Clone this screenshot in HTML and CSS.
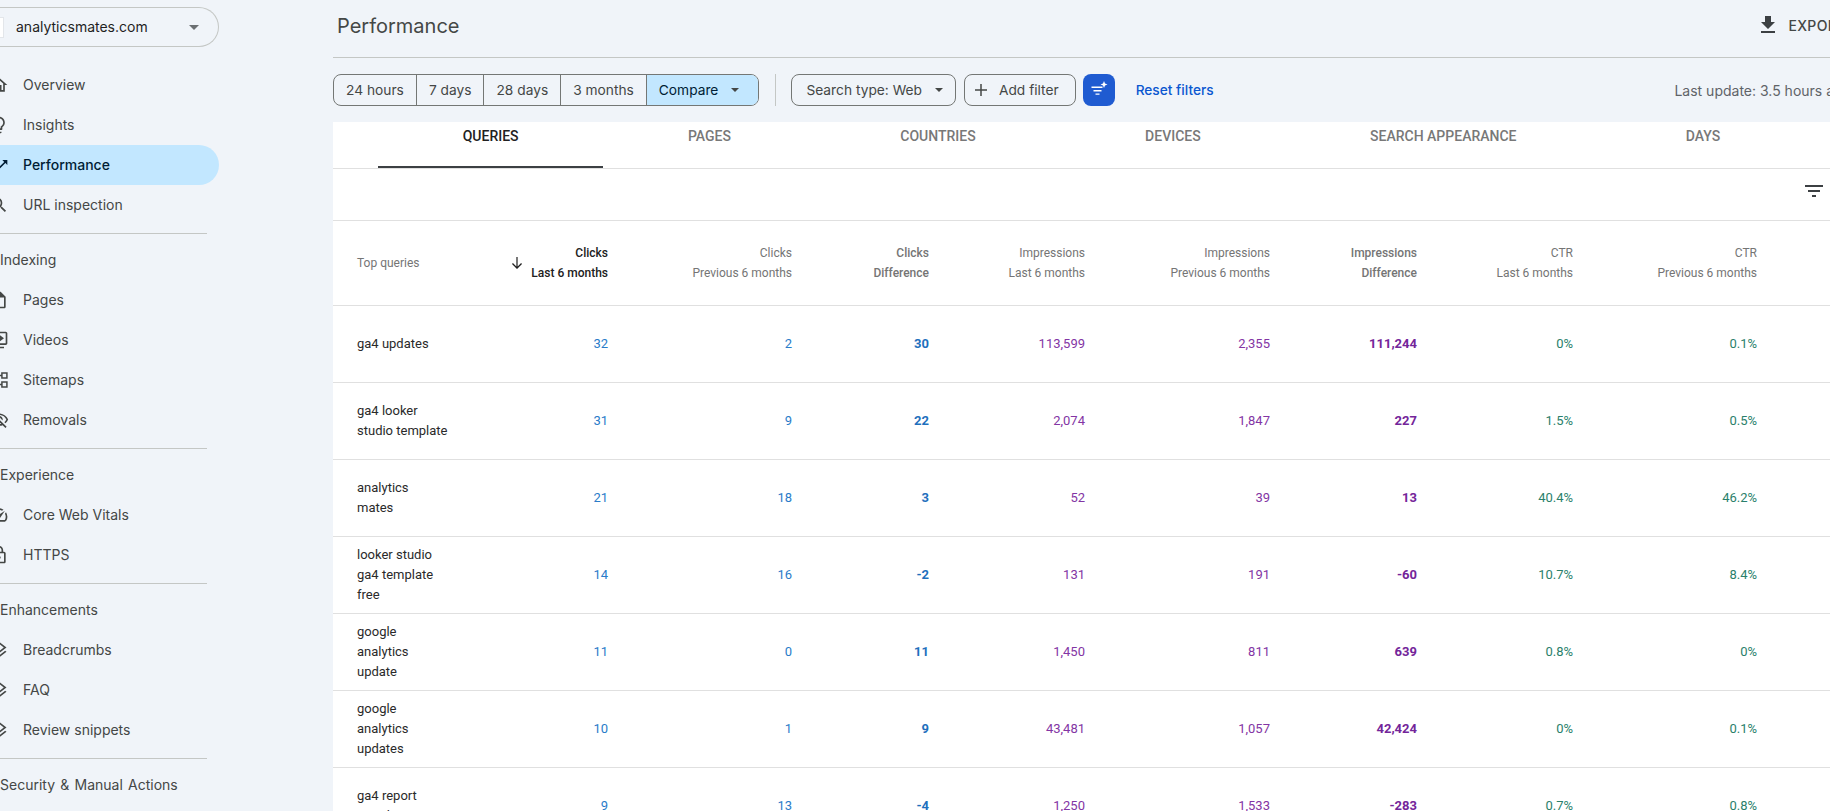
FILE: index.html
```html
<!DOCTYPE html>
<html lang="en">
<head>
<meta charset="utf-8">
<title>Performance</title>
<link rel="stylesheet" href="styles.css">
</head>
<body>
<svg class="defs" aria-hidden="true">
  <symbol id="i-home" viewBox="0 0 24 24"><path d="M12 5.69l5 4.5V18h-2v-6H9v6H7v-7.81l5-4.5M12 3L2 12h3v8h6v-6h2v6h6v-8h3L12 3z"/></symbol>
  <symbol id="i-bulb" viewBox="0 0 24 24"><path d="M9 21c0 .55.45 1 1 1h4c.55 0 1-.45 1-1v-1H9v1zm3-19C8.14 2 5 5.14 5 9c0 2.38 1.19 4.47 3 5.74V17c0 .55.45 1 1 1h6c.55 0 1-.45 1-1v-2.26c1.81-1.27 3-3.36 3-5.74 0-3.86-3.14-7-7-7zm2.85 11.1l-.85.6V16h-4v-2.3l-.85-.6A4.997 4.997 0 0 1 7 9c0-2.76 2.24-5 5-5s5 2.24 5 5c0 1.63-.8 3.16-2.15 4.1z"/></symbol>
  <symbol id="i-trend" viewBox="0 0 24 24"><path d="M16 6l2.29 2.29-4.88 4.88-4-4L2 16.59 3.41 18l6-6 4 4 6.3-6.29L22 12V6z"/></symbol>
  <symbol id="i-search" viewBox="0 0 24 24"><path d="M15.5 14h-.79l-.28-.27A6.471 6.471 0 0 0 16 9.5 6.5 6.5 0 1 0 9.5 16c1.61 0 3.09-.59 4.23-1.57l.27.28v.79l5 4.99L20.49 19l-4.99-5zm-6 0C7.01 14 5 11.99 5 9.5S7.01 5 9.5 5 14 7.01 14 9.5 11.99 14 9.5 14z"/></symbol>
  <symbol id="i-page" viewBox="0 0 24 24"><path d="M14 2H6c-1.1 0-2 .9-2 2v16c0 1.1.9 2 2 2h12c1.1 0 2-.9 2-2V8l-6-6zm4 18H6V4h7v5h5v11z"/></symbol>
  <symbol id="i-video" viewBox="0 0 24 24"><path d="M4 6H2v14c0 1.1.9 2 2 2h14v-2H4V6zm16-4H8c-1.1 0-2 .9-2 2v12c0 1.1.9 2 2 2h12c1.1 0 2-.9 2-2V4c0-1.1-.9-2-2-2zm0 14H8V4h12v12zM12 5.5v9l6-4.5z"/></symbol>
  <symbol id="i-map" viewBox="0 0 24 24"><path fill="none" stroke="#444746" stroke-width="1.8" d="M15.5 3.600h6v6h-6zM15.500 14.400h6v6h-6zM15.500 6.600H9M15.500 17.400H9M9 6.600v10.800"/></symbol>
  <symbol id="i-off" viewBox="0 0 24 24"><path d="M12 6a9.77 9.77 0 0 1 8.82 5.5 9.647 9.647 0 0 1-2.41 3.12l1.41 1.41c1.39-1.23 2.49-2.77 3.18-4.53C21.27 7.11 17 4 12 4c-1.27 0-2.49.2-3.64.57l1.65 1.65C10.66 6.09 11.32 6 12 6zm-1.07 1.14L13 9.21c.57.25 1.03.71 1.28 1.28l2.07 2.07c.08-.34.14-.7.14-1.07C16.5 9.01 14.48 7 12 7c-.37 0-.72.05-1.07.14zM2.01 3.87l2.68 2.68A11.738 11.738 0 0 0 1 11.5C2.73 15.89 7 19 12 19c1.52 0 2.98-.29 4.32-.82l3.42 3.42 1.41-1.41L3.42 2.45 2.01 3.87zm7.5 7.5l2.61 2.61c-.04.01-.08.02-.12.02-1.38 0-2.5-1.12-2.5-2.5 0-.05.01-.08.01-.13zm-3.4-3.4l1.75 1.75a4.6 4.6 0 0 0-.36 1.78 4.507 4.507 0 0 0 6.27 4.14l.98.98c-.88.24-1.8.38-2.75.38a9.77 9.77 0 0 1-8.82-5.5c.7-1.43 1.72-2.61 2.93-3.53z"/></symbol>
  <symbol id="i-speed" viewBox="0 0 24 24"><path d="M20.38 8.57l-1.23 1.85a8 8 0 0 1-.22 7.58H5.07A8 8 0 0 1 15.58 6.85l1.85-1.23A10 10 0 0 0 3.35 19a2 2 0 0 0 1.72 1h13.85a2 2 0 0 0 1.74-1 10 10 0 0 0-.27-10.44zm-9.79 6.84a2 2 0 0 0 2.83 0l5.66-8.49-8.49 5.66a2 2 0 0 0 0 2.83z"/></symbol>
  <symbol id="i-lock" viewBox="0 0 24 24"><path d="M18 8h-1V6c0-2.76-2.24-5-5-5S7 3.24 7 6v2H6c-1.1 0-2 .9-2 2v10c0 1.1.9 2 2 2h12c1.1 0 2-.9 2-2V10c0-1.1-.9-2-2-2zM9 6c0-1.66 1.34-3 3-3s3 1.34 3 3v2H9V6zm9 14H6V10h12v10zm-6-3c1.1 0 2-.9 2-2s-.9-2-2-2-2 .9-2 2 .9 2 2 2z"/></symbol>
  <symbol id="i-layers" viewBox="0 0 24 24"><path d="M11.99 18.54l-7.37-5.73L3 14.07l9 7 9-7-1.63-1.27-7.38 5.74zM12 16l7.36-5.73L21 9l-9-7-9 7 1.63 1.27L12 16zm0-11.47L17.74 9 12 13.47 6.26 9 12 4.53z"/></symbol>
</svg>

<div class="app">
  <aside class="sidebar">
    <div class="side-inner">
      <div class="property">
        <span class="favicon"></span>
        <span class="property-name">analyticsmates.com</span>
        <span class="caret caret-lg"></span>
      </div>
      <nav class="nav">
        <a class="nav-item"><svg class="nav-icon"><use href="#i-home"/></svg>Overview</a>
        <a class="nav-item"><svg class="nav-icon"><use href="#i-bulb"/></svg>Insights</a>
        <a class="nav-item active"><svg class="nav-icon"><use href="#i-trend"/></svg>Performance</a>
        <a class="nav-item"><svg class="nav-icon"><use href="#i-search"/></svg>URL inspection</a>
        <hr class="nav-div">
        <div class="nav-head">Indexing</div>
        <a class="nav-item"><svg class="nav-icon"><use href="#i-page"/></svg>Pages</a>
        <a class="nav-item"><svg class="nav-icon"><use href="#i-video"/></svg>Videos</a>
        <a class="nav-item"><svg class="nav-icon"><use href="#i-map"/></svg>Sitemaps</a>
        <a class="nav-item"><svg class="nav-icon"><use href="#i-off"/></svg>Removals</a>
        <hr class="nav-div">
        <div class="nav-head">Experience</div>
        <a class="nav-item"><svg class="nav-icon"><use href="#i-speed"/></svg>Core Web Vitals</a>
        <a class="nav-item"><svg class="nav-icon"><use href="#i-lock"/></svg>HTTPS</a>
        <hr class="nav-div">
        <div class="nav-head">Enhancements</div>
        <a class="nav-item"><svg class="nav-icon"><use href="#i-layers"/></svg>Breadcrumbs</a>
        <a class="nav-item"><svg class="nav-icon"><use href="#i-layers"/></svg>FAQ</a>
        <a class="nav-item"><svg class="nav-icon"><use href="#i-layers"/></svg>Review snippets</a>
        <hr class="nav-div">
        <div class="nav-head nav-head-wide">Security &amp; Manual Actions</div>
      </nav>
    </div>
  </aside>

  <main class="main">
    <header class="topbar">
      <h1 class="title">Performance</h1>
      <a class="export">
        <svg class="export-icon" viewBox="0 0 24 24"><path d="M19 9h-4V3H9v6H5l7 7 7-7zM5 18v2h14v-2H5z"/></svg>
        EXPORT
      </a>
    </header>

    <div class="filters">
      <div class="segments">
        <span class="seg">24 hours</span>
        <span class="seg">7 days</span>
        <span class="seg">28 days</span>
        <span class="seg">3 months</span>
        <span class="seg seg-on">Compare<span class="caret"></span></span>
      </div>
      <span class="vdiv"></span>
      <span class="chip chip-type">Search type: Web<span class="caret"></span></span>
      <span class="chip chip-add">
        <svg class="plus" viewBox="0 0 12 12"><path d="M5.250 0h1.500v5.250H12v1.500H6.750V12h-1.500V6.750H0v-1.500h5.250z"/></svg>
        Add filter
      </span>
      <span class="ai-btn">
        <svg viewBox="0 0 32 32"><path d="M8.500 12.600h11v1.400h-11zM10.500 16h8v1.400h-8zM12.500 19.400h4v1.400h-4z"/><path d="M21 7l1 2.500 2.500 1-2.500 1-1 2.500-1-2.500-2.500-1 2.500-1z"/></svg>
      </span>
      <a class="reset">Reset filters</a>
      <span class="updated">Last update: 3.5 hours ago</span>
    </div>

    <section class="panel">
      <div class="tabs">
        <span class="tab tab-on">QUERIES</span>
        <span class="tab">PAGES</span>
        <span class="tab">COUNTRIES</span>
        <span class="tab">DEVICES</span>
        <span class="tab">SEARCH APPEARANCE</span>
        <span class="tab">DAYS</span>
      </div>
      <div class="toolbar">
        <svg class="filter-icon" viewBox="0 0 24 24"><path d="M10 18h4v-2h-4v2zM3 6v2h18V6H3zm3 7h12v-2H6v2z"/></svg>
      </div>

      <div class="row head">
        <div class="cell query">Top queries</div>
        <div class="cell sorted">
          <svg class="sort" viewBox="0 0 12 12"><path d="M5.400 0h1.200v9.600l3.500-3.500.9.850L6 12 1 6.950l.9-.85 3.500 3.500z"/></svg>
          <span>Clicks<br>Last 6 months</span>
        </div>
        <div class="cell">Clicks<br>Previous 6 months</div>
        <div class="cell diff">Clicks<br>Difference</div>
        <div class="cell">Impressions<br>Last 6 months</div>
        <div class="cell">Impressions<br>Previous 6 months</div>
        <div class="cell diff">Impressions<br>Difference</div>
        <div class="cell">CTR<br>Last 6 months</div>
        <div class="cell">CTR<br>Previous 6 months</div>
      </div>

      <div class="row">
        <div class="cell query">ga4 updates</div>
        <div class="cell c">32</div><div class="cell c">2</div><div class="cell c b">30</div>
        <div class="cell i">113,599</div><div class="cell i">2,355</div><div class="cell i b">111,244</div>
        <div class="cell t">0%</div><div class="cell t">0.1%</div>
      </div>
      <div class="row">
        <div class="cell query">ga4 looker<br>studio template</div>
        <div class="cell c">31</div><div class="cell c">9</div><div class="cell c b">22</div>
        <div class="cell i">2,074</div><div class="cell i">1,847</div><div class="cell i b">227</div>
        <div class="cell t">1.5%</div><div class="cell t">0.5%</div>
      </div>
      <div class="row">
        <div class="cell query">analytics<br>mates</div>
        <div class="cell c">21</div><div class="cell c">18</div><div class="cell c b">3</div>
        <div class="cell i">52</div><div class="cell i">39</div><div class="cell i b">13</div>
        <div class="cell t">40.4%</div><div class="cell t">46.2%</div>
      </div>
      <div class="row">
        <div class="cell query">looker studio<br>ga4 template<br>free</div>
        <div class="cell c">14</div><div class="cell c">16</div><div class="cell c b">-2</div>
        <div class="cell i">131</div><div class="cell i">191</div><div class="cell i b">-60</div>
        <div class="cell t">10.7%</div><div class="cell t">8.4%</div>
      </div>
      <div class="row">
        <div class="cell query">google<br>analytics<br>update</div>
        <div class="cell c">11</div><div class="cell c">0</div><div class="cell c b">11</div>
        <div class="cell i">1,450</div><div class="cell i">811</div><div class="cell i b">639</div>
        <div class="cell t">0.8%</div><div class="cell t">0%</div>
      </div>
      <div class="row">
        <div class="cell query">google<br>analytics<br>updates</div>
        <div class="cell c">10</div><div class="cell c">1</div><div class="cell c b">9</div>
        <div class="cell i">43,481</div><div class="cell i">1,057</div><div class="cell i b">42,424</div>
        <div class="cell t">0%</div><div class="cell t">0.1%</div>
      </div>
      <div class="row">
        <div class="cell query">ga4 report<br>template</div>
        <div class="cell c">9</div><div class="cell c">13</div><div class="cell c b">-4</div>
        <div class="cell i">1,250</div><div class="cell i">1,533</div><div class="cell i b">-283</div>
        <div class="cell t">0.7%</div><div class="cell t">0.8%</div>
      </div>
    </section>
  </main>
</div>
</body>
</html>
```

FILE: styles.css
```css
* { box-sizing: border-box; }
html, body { margin: 0; height: 100%; overflow: hidden; }
body { background: #f0f4f9; color: #444746; font-family: "Inter", "Liberation Sans", sans-serif; font-size: 14px; }
.defs { width: 0; height: 0; display: block; }

.app { display: flex; width: 1830px; height: 811px; overflow: hidden; }

/* Sidebar */
.sidebar { flex: 0 0 333px; overflow: hidden; }
.side-inner { width: 239px; margin-left: -20px; padding-top: 7px; }
.property { display: flex; align-items: center; height: 40px; border: 1px solid #c4c7c5; border-radius: 0 20px 20px 0; border-left: 0; padding-left: 11px; }
.favicon { width: 13px; height: 21px; background: #fff; border: 1px solid #e3e6ea; margin-right: 12px; }
.property-name { color: #1f1f1f; font-size: 14px; flex: 1; padding-bottom: 1px; }
.caret { display: inline-block; width: 0; height: 0; border-left: 4px solid transparent; border-right: 4px solid transparent; border-top: 4px solid #444746; }
.caret-lg { border-left-width: 5px; border-right-width: 5px; border-top-width: 5px; border-top-color: #6b6f72; margin-right: 19px; }
.nav { margin-top: 18px; }
.nav-item { display: flex; align-items: center; height: 40px; padding: 0 0 2px 9px; gap: 14px; border-radius: 0 20px 20px 0; color: #444746; }
.nav-item.active { background: #c2e7ff; color: #001d35; font-weight: 500; }
.nav-icon { width: 20px; height: 20px; fill: #444746; flex: none; margin-top: 2px; }
.active .nav-icon { fill: #001d35; }
.nav-div { margin: 8px 12px 6px 0; border: 0; border-top: 1px solid #c4c7c5; }
.nav-head { display: flex; align-items: center; height: 40px; padding: 0 0 2px 20px; color: #444746; white-space: nowrap; }
.nav-head-wide { word-spacing: 1.3px; }

/* Main */
.main { flex: 1; min-width: 0; overflow: hidden; display: flex; flex-direction: column; }
.topbar { flex: none; display: flex; align-items: flex-start; justify-content: space-between; height: 58px; border-bottom: 1px solid #c4c7c5; white-space: nowrap; }
.title { margin: 13px 0 0 4px; font-size: 20px; line-height: 26px; font-weight: 400; color: #444746; }
.export { display: flex; align-items: center; gap: 9px; height: 24px; margin: 13px -16.500px 0 0; font-size: 14px; font-weight: 500; letter-spacing: .3px; color: #444746; }
.export-icon { width: 24px; height: 24px; fill: #3c4043; }

.filters { flex: none; display: flex; align-items: center; height: 64px; white-space: nowrap; font-size: 13.750px; }
.segments { display: flex; height: 32px; border: 1px solid #747775; border-radius: 8px; overflow: hidden; }
.seg { display: flex; align-items: center; padding: 0 12px; border-right: 1px solid #747775; color: #444746; }
.seg-on { background: #c2e7ff; color: #001d35; border-right: 0; padding-right: 18.500px; gap: 13px; }
.vdiv { width: 1px; height: 32px; background: #c4c7c5; margin: 0 15px 0 16.500px; }
.chip { display: flex; align-items: center; height: 32px; border: 1px solid #747775; border-radius: 8px; color: #444746; }
.chip-type { padding: 0 12px 0 14px; gap: 13px; margin-right: 8px; }
.chip-add { padding: 0 16px 0 10px; gap: 12px; margin-right: 7px; }
.plus { width: 12px; height: 12px; fill: #444746; }
.ai-btn { display: flex; align-items: center; justify-content: center; width: 32px; height: 32px; border-radius: 8px; background: #1f5bd1; }
.ai-btn svg { width: 32px; height: 32px; fill: #fff; }
.reset { margin-left: 21px; color: #0b57d0; font-weight: 500; font-size: 13.700px; }
.updated { margin-left: auto; margin-right: -21px; color: #5f6368; font-size: 14px; }

/* Panel */
.panel { flex: 1; background: #fff; font-family: "Roboto", "Liberation Sans", sans-serif; }
.tabs { display: flex; height: 47px; padding-left: 45px; border-bottom: 1px solid #e0e0e0; }
.tab { height: 46px; padding: 4px 84.700px 0; line-height: 20px; font-size: 14px; font-weight: 500; color: #787878; white-space: nowrap; }
.tab-on { color: #212121; border-bottom: 2px solid #3c4043; }
.toolbar { display: flex; justify-content: flex-end; height: 52px; padding: 10px 4px 0 0; border-bottom: 1px solid #e0e0e0; }
.filter-icon { width: 24px; height: 24px; fill: #3c4043; }

.row { display: grid; grid-template-columns: 177px 98px 184px 137px 156px 185px 147px 156px 184px; height: 77px; border-bottom: 1px solid #e0e0e0; align-items: center; font-size: 13px; line-height: 20px; }
.cell { text-align: right; white-space: nowrap; }
.query { text-align: left; padding-left: 24px; color: #2a2a2a; }
.head { height: 85px; font-size: 12px; font-weight: 400; color: #757575; }
.head .query { color: #757575; }
.head .diff { font-weight: 500; }
.sorted { display: flex; align-items: center; justify-content: space-between; color: #212121; font-weight: 500; }
.sort { width: 12px; height: 12px; fill: #212121; margin-left: 1px; }
.c { color: #2a7cc9; }
.i { color: #8335a4; }
.t { color: #2a7f6b; }
.b { font-weight: 700; }
.c.b { color: #1f70bd; }
.i.b { color: #74259a; }
```
